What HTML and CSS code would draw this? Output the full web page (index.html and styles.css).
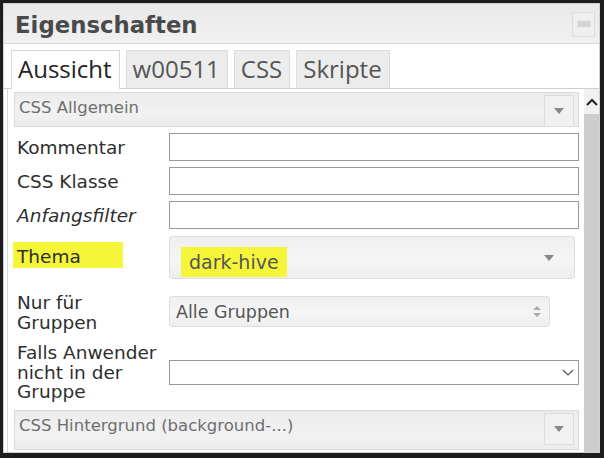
FILE: index.html
```html
<!DOCTYPE html>
<html lang="de">
<head>
<meta charset="utf-8">
<link rel="stylesheet" href="styles.css">
</head>
<body>
<div class="panel">
  <div class="header">
    <div class="title">Eigenschaften</div>
    <div class="hbtn"><svg width="14" height="6" viewBox="0 0 14 6"><path d="M0 1h14M0 3h14M0 5h14M3 0v6M7 0v6M11 0v6" stroke="#c4c4c4" stroke-width="1" fill="none"/></svg></div>
  </div>
  <div class="tabs">
    <div class="tab active">Aussicht</div>
    <div class="tab">w00511</div>
    <div class="tab">CSS</div>
    <div class="tab">Skripte</div>
  </div>
  <div class="body">
    <div class="content">
      <div class="group">
        <span>CSS Allgemein</span>
        <div class="gbtn"><span class="tri"></span></div>
      </div>
      <div class="row first">
        <div class="label">Kommentar</div>
        <div class="input"></div>
      </div>
      <div class="row">
        <div class="label">CSS Klasse</div>
        <div class="input"></div>
      </div>
      <div class="row">
        <div class="label italic">Anfangsfilter</div>
        <div class="input"></div>
      </div>
      <div class="row thema">
        <div class="label"><span class="hl hl-label">Thema</span></div>
        <div class="select big"><span class="hl hl-value">dark-hive</span><span class="tri"></span></div>
      </div>
      <div class="row groups">
        <div class="label multi">Nur für<br>Gruppen</div>
        <div class="select small"><span>Alle Gruppen</span>
          <svg width="8" height="11" viewBox="0 0 8 11"><path d="M4 0L8 4H0z M4 11L0 7H8z" fill="#aaa"/></svg>
        </div>
      </div>
      <div class="row falls">
        <div class="label multi">Falls Anwender<br>nicht in der<br>Gruppe</div>
        <div class="native">
          <svg width="12" height="7" viewBox="0 0 12 7"><path d="M1 1l5 5 5-5" stroke="#555" stroke-width="1.2" fill="none"/></svg>
        </div>
      </div>
      <div class="group last">
        <span>CSS Hintergrund (background-...)</span>
        <div class="gbtn"><span class="tri"></span></div>
      </div>
    </div>
    <div class="scrollbar">
      <div class="sb-up"><svg width="12" height="8" viewBox="0 0 12 8"><path d="M1 7l5-5 5 5" stroke="#222" stroke-width="2" fill="none"/></svg></div>
      <div class="sb-thumb"></div>
    </div>
  </div>
</div>
</body>
</html>
```

FILE: styles.css
```css
html, body {
  margin: 0;
  padding: 0;
  background: #1d1d1d;
}
body {
  padding: 3px 4px 6px 3px;
  width: 604px;
  height: 458px;
  box-sizing: border-box;
  font-family: "DejaVu Sans", Verdana, sans-serif;
}
.panel {
  height: 449px;
  background: #ececec;
  border: 1px solid #d2d2d2;
  border-top: 0;
  display: flex;
  flex-direction: column;
  overflow: hidden;
}
.header {
  height: 39px;
  background: linear-gradient(#e9e9e9, #f1f1f1);
  border-top: 1px solid #cfcfcf;
  border-bottom: 1px solid #d8d8d8;
  display: flex;
  align-items: center;
  justify-content: space-between;
  padding: 0 4px 0 11px;
}
.title {
  font-weight: bold;
  font-size: 22.8px;
  color: #4a4a4a;
  padding-top: 2px;
}
.hbtn {
  width: 21px;
  height: 23px;
  margin-top: 1px;
  border: 1px solid #dcdcdc;
  background: #efefef;
  display: flex;
  align-items: center;
  justify-content: center;
}
.tabs {
  display: flex;
  gap: 6px;
  padding: 6px 0 0 7px;
  background: #fff;
  border-bottom: 1px solid #cfcfcf;
  height: 38px;
}
.tab {
  font-family: "Open Sans", sans-serif;
  font-size: 24px;
  color: #555;
  background: #ececec;
  border: 1px solid #dcdcdc;
  border-bottom: 0;
  padding: 0 7px 0 6px;
  line-height: 35px;
  height: 38px;
  box-sizing: border-box;
}
.tab.active {
  background: #fff;
  color: #222;
  height: 39px;
  border-color: #d6d6d6;
}
.body {
  flex: 1;
  display: flex;
  background: #fff;
  min-height: 0;
}
.content {
  flex: 1;
  padding: 3px 5px 0 6px;
  border-left: 1px solid #d8d8d8;
  margin-left: 3px;
}
.group {
  height: 35px;
  background: linear-gradient(#ececec, #f2f2f2 60%, #ececec);
  border: 1px solid #dadada;
  display: flex;
  justify-content: space-between;
  align-items: flex-start;
  font-size: 16.5px;
  color: #6e6e6e;
  padding: 5px 4px 0 4px;
  box-sizing: border-box;
}
.group > span { line-height: 19px; }
.gbtn {
  width: 30px;
  height: 32px;
  margin-top: -3px;
  border: 1px solid #dcdcdc;
  background: #f1f1f1;
  display: flex;
  align-items: center;
  justify-content: center;
  box-sizing: border-box;
}
.tri {
  width: 0;
  height: 0;
  border-left: 5px solid transparent;
  border-right: 5px solid transparent;
  border-top: 6px solid #888;
}
.row {
  display: flex;
  align-items: center;
  margin-top: 6px;
}
.row.first { margin-top: 6px; }
.label {
  width: 155px;
  box-sizing: border-box;
  padding-left: 3px;
  font-size: 18.5px;
  color: #2e2e2e;
  line-height: 23px;
  flex: none;
}
.label.multi { line-height: 19.5px; }
.italic { font-style: italic; }
.input {
  width: 410px;
  height: 28px;
  border: 1.5px solid #999;
  box-sizing: border-box;
  background: #fff;
}
.hl { background: #f5f53a; }
.hl-label {
  display: inline-block;
  margin-left: -4px;
  margin-bottom: 5px;
  padding: 3px 42px 0 4px;
  height: 26px;
  box-sizing: border-box;
}
.select {
  display: flex;
  align-items: center;
  justify-content: space-between;
  background: linear-gradient(#efefef, #f5f5f5 55%, #eeeeee);
  border: 1px solid #dedede;
  border-radius: 3px;
  box-sizing: border-box;
}
.select.big {
  width: 406px;
  height: 43px;
  padding: 0 20px 0 11px;
  font-size: 19px;
  color: #555;
}
.hl-value {
  padding: 4px 8px 4px 8px;
  margin-top: 9px;
}
.thema { margin-top: 7px; }
.select.small {
  width: 381px;
  height: 31px;
  padding: 0 8px 0 6px;
  font-size: 17.5px;
  color: #555;
}
.groups {
  margin-top: 14px;
  align-items: flex-start;
}
.groups .select { margin-top: 3px; }
.falls { margin-top: 11px; }
.native {
  width: 410px;
  height: 25px;
  border: 1.5px solid #999;
  box-sizing: border-box;
  display: flex;
  align-items: center;
  justify-content: flex-end;
  padding-right: 4px;
}
.group.last {
  margin-top: 8px;
  height: 40px;
}
.group.last .gbtn { margin-top: -3px; }
.scrollbar {
  width: 15px;
  display: flex;
  flex-direction: column;
  background: #f1f1f1;
}
.sb-up {
  height: 25px;
  display: flex;
  align-items: center;
  justify-content: center;
}
.sb-thumb {
  flex: 1;
  background: #cdcdcd;
}
```
